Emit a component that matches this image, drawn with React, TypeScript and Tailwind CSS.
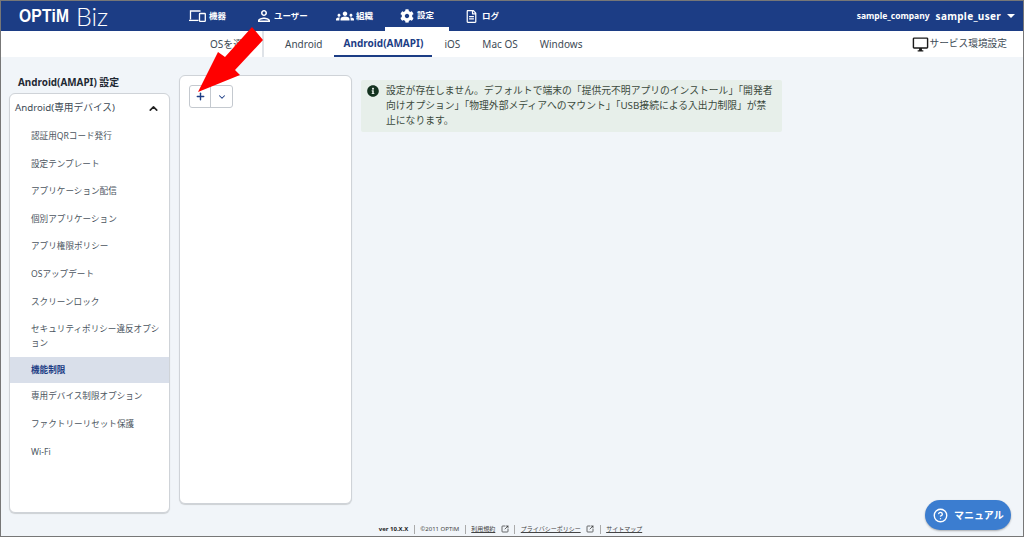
import { ChevronDown, ChevronUp, CircleHelp, Plus, SquareArrowOutUpRight } from 'lucide-react';
import { FaCog, FaInfoCircle, FaRegFileAlt } from 'react-icons/fa';
import { MdGroups, MdOutlineDesktopWindows, MdOutlinePerson } from 'react-icons/md';

const menuItems = [
  '認証用QRコード発行',
  '設定テンプレート',
  'アプリケーション配信',
  '個別アプリケーション',
  'アプリ権限ポリシー',
  'OSアップデート',
  'スクリーンロック',
  'セキュリティポリシー違反オプション',
  '機能制限',
  '専用デバイス制限オプション',
  'ファクトリーリセット保護',
  'Wi-Fi',
];

function DeviceIcon() {
  return (
    <svg width="17" height="12" viewBox="0 0 17 12" fill="none" stroke="white" strokeWidth="1.3">
      <path d="M1.5 9.5V1h10" />
      <path d="M0 10.4h9.5" />
      <rect x="10.5" y="3.5" width="5.8" height="7.8" rx="0.6" />
    </svg>
  );
}

function HeaderNav() {
  return (
    <div className="flex h-full items-center text-[8.5px] font-bold text-white">
      <div className="ml-[188px] flex w-[66px] items-center gap-[3px]">
        <DeviceIcon />
        <span>機器</span>
      </div>
      <div className="flex w-[81px] items-center gap-[1px]">
        <MdOutlinePerson size={18} />
        <span>ユーザー</span>
      </div>
      <div className="flex w-[49px] items-center gap-[2px]">
        <MdGroups size={18} />
        <span>組織</span>
      </div>
      <div className="flex h-full w-[64px] items-center justify-center gap-[3px] border-b-[4px] border-white pt-[3px]">
        <FaCog size={14} />
        <span>設定</span>
      </div>
      <div className="ml-[16px] flex items-center gap-[4px]">
        <FaRegFileAlt size={13} />
        <span>ログ</span>
      </div>
    </div>
  );
}

function SubNav() {
  return (
    <div className="flex h-[26px] items-stretch bg-white text-[10px] text-[#3d4a55]">
      <div className="ml-[209px] flex w-[54px] items-center border-r-2 border-[#dfe3e8]">OSを選択</div>
      <div className="ml-[21px] flex items-center">Android</div>
      <div className="ml-[12px] flex w-[98px] items-center justify-center border-b-2 border-[#1c3d85] font-bold text-[#1c3d85]">
        Android(AMAPI)
      </div>
      <div className="ml-[12px] flex items-center">iOS</div>
      <div className="ml-[22px] flex items-center">Mac OS</div>
      <div className="ml-[22px] flex items-center">Windows</div>
      <div className="ml-auto mr-[16px] flex items-center gap-[1px] text-[9.7px]">
        <MdOutlineDesktopWindows size={17} className="text-[#1a1a1a]" />
        <span>サービス環境設定</span>
      </div>
    </div>
  );
}

function SideMenu() {
  return (
    <div className="w-[161px]">
      <div className="ml-[9px] mt-[16px] h-[20px] text-[9.9px] font-bold leading-[18px] text-[#1f2933]">Android(AMAPI) 設定</div>
      <div className="h-[420px] rounded-md border border-[#cfd3d8] bg-white shadow-[0_1px_1px_rgba(0,0,0,0.15)]">
        <div className="flex h-[29px] items-center justify-between pl-[5px] pr-[9px] text-[9.7px] text-[#3d4a55]">
          <span>Android(専用デバイス)</span>
          <ChevronUp size={13} strokeWidth={3} className="text-[#222]" />
        </div>
        <ul>
          {menuItems.map((item) => {
            const active = item === '機能制限';
            return (
              <li
                key={item}
                className={
                  active
                    ? 'bg-[#d9dfea] py-[6.5px] pl-[21px] pr-[9px] text-[8.6px] font-bold leading-[13px] text-[#1c3d85]'
                    : 'py-[7px] pl-[21px] pr-[9px] text-[8.6px] leading-[13.6px] text-[#4b5560]'
                }
              >
                {item}
              </li>
            );
          })}
        </ul>
      </div>
    </div>
  );
}

function Footer() {
  return (
    <div className="flex h-[14px] items-center justify-center gap-[5.5px] pr-[3px] text-[6px] text-[#444]">
      <span className="font-bold text-[#222]">ver 10.X.X</span>
      <span className="h-[9px] border-l border-[#aaa]" />
      <span>©2011 OPTiM</span>
      <span className="h-[9px] border-l border-[#aaa]" />
      <span className="underline">利用規約</span>
      <SquareArrowOutUpRight size={8} className="text-[#222]" />
      <span className="h-[9px] border-l border-[#aaa]" />
      <span className="underline">プライバシーポリシー</span>
      <SquareArrowOutUpRight size={8} className="text-[#222]" />
      <span className="h-[9px] border-l border-[#aaa]" />
      <span className="underline">サイトマップ</span>
    </div>
  );
}

export default function App() {
  return (
    <div className="relative flex h-[537px] w-[1024px] flex-col overflow-hidden border border-[#777] bg-[#f1f5f9] font-['Noto_Sans','Noto_Sans_CJK_JP',sans-serif]">
      {/* Header */}
      <div className="flex h-[30px] shrink-0 bg-[#1c3d85]">
        <div className="absolute left-[18px] top-[1px] flex h-[28px] items-center text-white">
          <span className="w-[52px] origin-left scale-x-[0.82] font-['Liberation_Sans',sans-serif] text-[19px] font-bold tracking-[0.3px]">OPTiM</span>
          <span className="ml-[5px] font-['Lato',sans-serif] text-[25px] font-light leading-none">Biz</span>
        </div>
        <HeaderNav />
        <div className="ml-auto flex items-center gap-[6px] pr-[8px] font-bold text-white">
          <span className="text-[8.5px]">sample_company</span>
          <span className="text-[10px] tracking-[0.3px]">sample_user</span>
          <span className="h-0 w-0 border-x-[4px] border-t-[4px] border-x-transparent border-t-white" />
        </div>
      </div>

      <SubNav />

      {/* Body */}
      <div className="flex min-h-0 flex-1 items-start pl-[8px]">
        <SideMenu />
        <div className="ml-[9px] mt-[18px] h-[429px] w-[173px] rounded-md border border-[#cfd3d8] bg-white p-[9px] shadow-[0_1px_1px_rgba(0,0,0,0.15)]">
          <div className="flex h-[23px] w-[44px] rounded-[3px] border border-[#c4c9cf] text-[#1c3d85]">
            <div className="flex flex-1 items-center justify-center border-r border-[#c4c9cf]">
              <Plus size={11} strokeWidth={3} />
            </div>
            <div className="flex w-[21px] items-center justify-center">
              <ChevronDown size={10} strokeWidth={2.5} />
            </div>
          </div>
        </div>
        <div className="ml-[9px] mt-[23px] flex h-[52px] w-[421px] gap-[7px] rounded-[2px] bg-[#e7efea] pl-[6px] pr-[7px] pt-[3px] text-[9.8px] leading-[15px] text-[#3b4a3d]">
          <FaInfoCircle size={12} className="mt-[2px] shrink-0 text-[#14321f]" />
          <p>
            設定が存在しません。デフォルトで端末の「提供元不明アプリのインストール」「開発者向けオプション」「物理外部メディアへのマウント」「USB接続による入出力制限」が禁止になります。
          </p>
        </div>
      </div>

      <Footer />

      {/* Manual button */}
      <div className="absolute left-[924px] top-[499px] flex h-[30px] w-[86px] items-center gap-[6px] rounded-full bg-[#3b7dd0] pl-[8px] text-[10px] font-bold text-white shadow-[0_1px_2px_rgba(0,0,0,0.3)]">
        <CircleHelp size={15} strokeWidth={2.2} />
        <span>マニュアル</span>
      </div>

      {/* Red annotation arrow */}
      <svg className="absolute left-[-1px] top-[-1px]" width="300" height="120" viewBox="0 0 300 120">
        <polygon points="198,92 218,52 225,57 252,27 263,40 235,70 240,75" fill="#ff0000" />
      </svg>
    </div>
  );
}
